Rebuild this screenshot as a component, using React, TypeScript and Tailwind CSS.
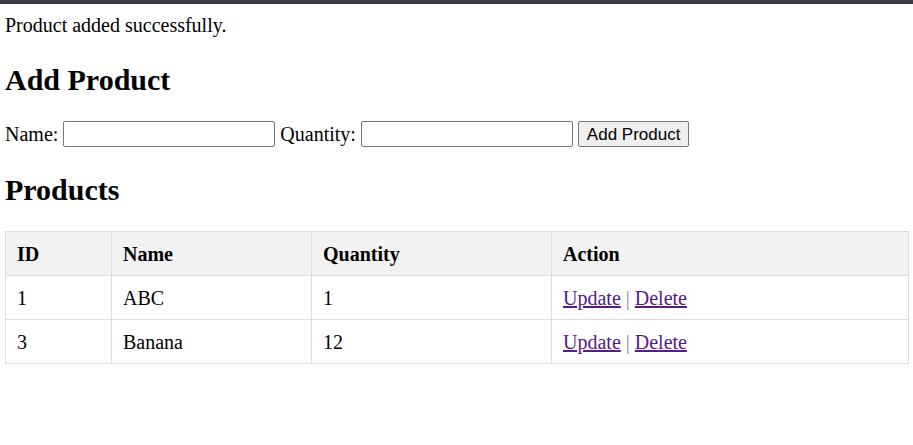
import React from "react";

const rows = [
  { id: 1, name: "ABC", qty: 1 },
  { id: 3, name: "Banana", qty: 12 },
];

export default function App() {
  const serif = { fontFamily: '"Liberation Serif", "Times New Roman", serif' };
  return (
    <div className="min-h-[445px] bg-white text-black" style={serif}>
      <div className="h-[4px] bg-[#3a3a40]" />
      <div className="px-[5px]">
        <p className="text-[20px] leading-[23px] mt-[10px] mb-0">Product added successfully.</p>
        <h2 className="text-[30px] font-bold leading-[34px] mt-[26px] mb-0">Add Product</h2>
        <div className="mt-[24px] flex items-center text-[20px] leading-[23px] h-[26px]">
          <label>Name:</label>
          <input type="text" className="ml-[5px] w-[212px] h-[26px] border border-[#767676] rounded-[2px] bg-white" />
          <label className="ml-[5px]">Quantity:</label>
          <input type="text" className="ml-[5px] w-[212px] h-[26px] border border-[#767676] rounded-[2px] bg-white" />
          <button
            className="ml-[5px] h-[26px] px-[8px] border border-[#767676] rounded-[2px] bg-[#efefef] text-black"
            style={{ fontFamily: '"Liberation Sans", Arial, sans-serif', fontSize: "17px" }}
          >
            Add Product
          </button>
        </div>
        <h2 className="text-[30px] font-bold leading-[34px] mt-[26px] mb-0">Products</h2>
        <table className="mt-[24px] w-[903px] border-collapse text-[20px] table-fixed">
          <colgroup>
            <col className="w-[106px]" />
            <col className="w-[200px]" />
            <col className="w-[240px]" />
            <col className="w-[357px]" />
          </colgroup>
          <thead>
            <tr className="bg-[#f2f2f2] h-[44px]">
              {["ID", "Name", "Quantity", "Action"].map((h) => (
                <th key={h} className="border border-[#dddddd] px-[11px] py-0 text-left font-bold">
                  {h}
                </th>
              ))}
            </tr>
          </thead>
          <tbody>
            {rows.map((r) => (
              <tr key={r.id} className="h-[44px]">
                <td className="border border-[#dddddd] px-[11px] py-0">{r.id}</td>
                <td className="border border-[#dddddd] px-[11px] py-0">{r.name}</td>
                <td className="border border-[#dddddd] px-[11px] py-0">{r.qty}</td>
                <td className="border border-[#dddddd] px-[11px] py-0">
                  <a href="#" className="text-[#551a8b] underline">Update</a>
                  <span className="text-[#888]"> | </span>
                  <a href="#" className="text-[#551a8b] underline">Delete</a>
                </td>
              </tr>
            ))}
          </tbody>
        </table>
      </div>
    </div>
  );
}
